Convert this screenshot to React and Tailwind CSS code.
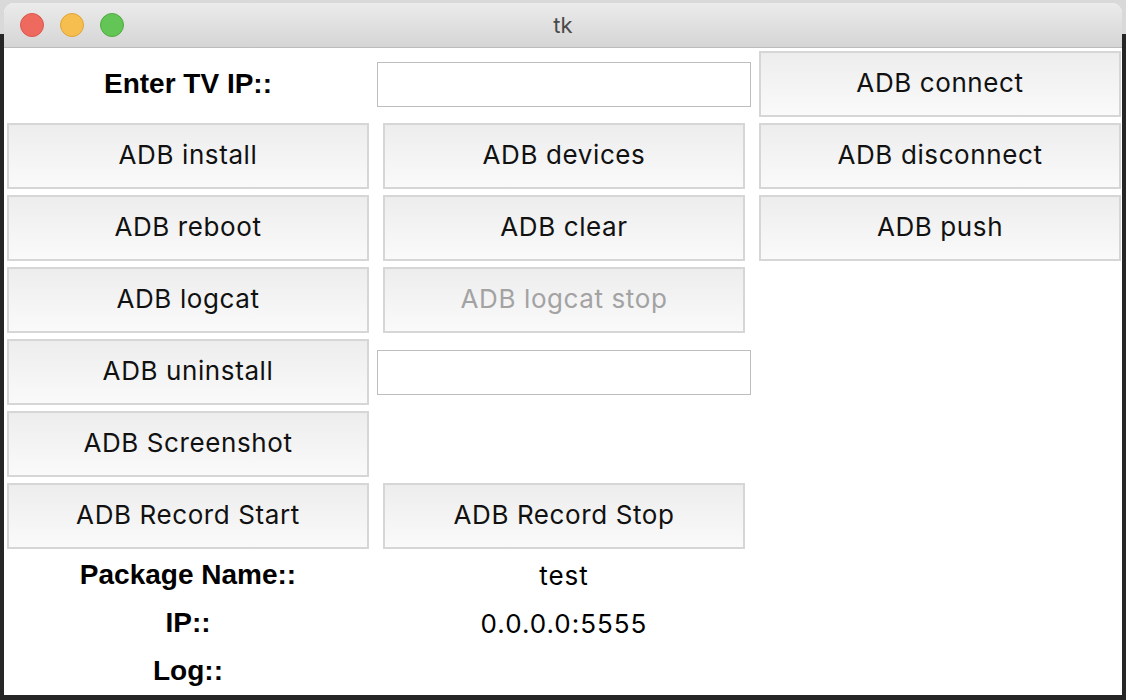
import React from "react";

const btn =
  "h-[66px] pb-[4px] border-2 border-[#d6d6d6] bg-gradient-to-b from-[#ededed] to-[#fafafa] flex items-center justify-center text-[26px] tracking-[0.6px] text-[#111]";

const boldFont = { fontFamily: "'Liberation Sans', Arial, sans-serif" };

function Btn({ children, disabled }) {
  return (
    <div className={btn + (disabled ? " text-[#a3a3a3]" : "")}>{children}</div>
  );
}

function Entry() {
  return (
    <div className="flex items-center h-[66px] -mx-[6px]">
      <div className="w-full h-[45px] border border-[#bdbdbd] bg-white" />
    </div>
  );
}

export default function App() {
  return (
    <div
      className="w-[1126px] h-[700px] overflow-hidden bg-[linear-gradient(to_bottom,#d9d9d9_0,#d9d9d9_34px,#262626_34px)] pt-[3px] pl-[4px]"
      style={{ fontFamily: "Inter, 'Liberation Sans', sans-serif" }}
    >
      <div className="w-[1118px] h-[692px] rounded-t-[10px] overflow-hidden bg-white flex flex-col">
        {/* title bar */}
        <div className="h-[45px] shrink-0 flex items-center px-[16px] bg-gradient-to-b from-[#ebebeb] to-[#d5d5d5] border-b border-[#bcbcbc]">
          <div className="flex gap-[16px] w-[104px]">
            <span className="w-[24px] h-[24px] rounded-full bg-[#ee6a5f] border border-[#d9574c]" />
            <span className="w-[24px] h-[24px] rounded-full bg-[#f5be4f] border border-[#dea33a]" />
            <span className="w-[24px] h-[24px] rounded-full bg-[#62c555] border border-[#4faa42]" />
          </div>
          <div className="flex-1 text-center text-[22px] text-[#4a4a4a] pr-[104px]">tk</div>
        </div>

        <div className="px-[3px] pt-[3px] grid grid-cols-[362px_362px_362px] gap-x-[14px] gap-y-[6px]">
          <div className="h-[66px] flex items-center justify-center font-bold text-[28px] text-black" style={boldFont}>
            Enter TV IP::
          </div>
          <Entry />
          <Btn>ADB connect</Btn>

          <Btn>ADB install</Btn>
          <Btn>ADB devices</Btn>
          <Btn>ADB disconnect</Btn>

          <Btn>ADB reboot</Btn>
          <Btn>ADB clear</Btn>
          <Btn>ADB push</Btn>

          <Btn>ADB logcat</Btn>
          <Btn disabled>ADB logcat stop</Btn>
          <div />

          <Btn>ADB uninstall</Btn>
          <Entry />
          <div />

          <Btn>ADB Screenshot</Btn>
          <div />
          <div />

          <Btn>ADB Record Start</Btn>
          <Btn>ADB Record Stop</Btn>
          <div />
        </div>

        <div className="px-[3px] pt-[2px] grid grid-cols-[362px_362px_362px] gap-x-[14px] text-black">
          {[
            ["Package Name::", "test"],
            ["IP::", "0.0.0.0:5555"],
            ["Log::", ""],
          ].map(([label, value]) => (
            <React.Fragment key={label}>
              <div className="h-[48px] flex items-center justify-center font-bold text-[28px]" style={boldFont}>
                {label}
              </div>
              <div className="h-[48px] flex items-center justify-center text-[26px] tracking-[1px]">{value}</div>
              <div />
            </React.Fragment>
          ))}
        </div>
      </div>
    </div>
  );
}
